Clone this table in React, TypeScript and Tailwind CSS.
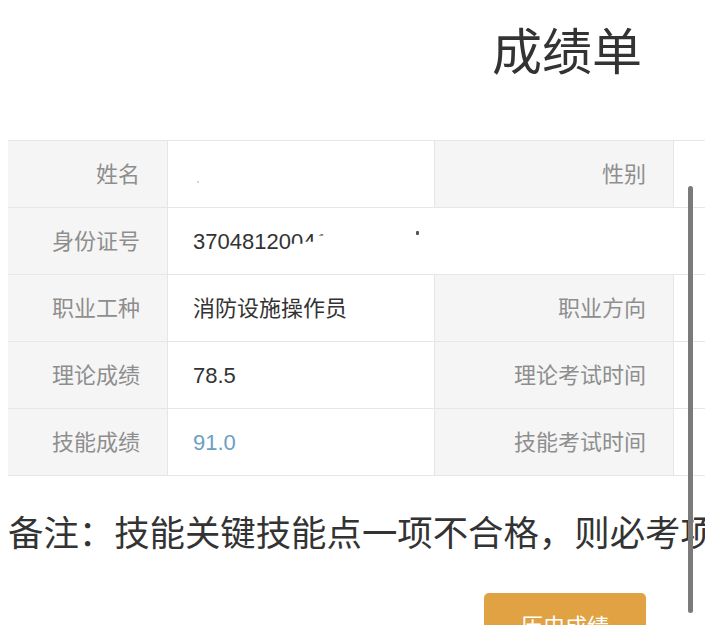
const rows = [
  { label: '姓名', value: 'name', label2: '性别' },
  { label: '身份证号', value: 'id' },
  { label: '职业工种', value: '消防设施操作员', label2: '职业方向' },
  { label: '理论成绩', value: '78.5', label2: '理论考试时间' },
  { label: '技能成绩', value: '91.0', label2: '技能考试时间', blue: true },
]

const font = "font-['Liberation_Sans','Noto_Sans_CJK_SC',sans-serif]"

function LabelCell({ text }: { text: string }) {
  return (
    <div className="flex h-[66px] items-center justify-end border-r border-[#e6e6e6] bg-[#f5f5f5] pr-[27px] text-[22px] text-[#8e8e8e]">
      {text}
    </div>
  )
}

function IdValue() {
  return (
    <div className="col-span-3 flex h-[66px] items-center pl-[25px] text-[22px] text-[#333]">
      <span>37048120</span>
      <span className="[clip-path:inset(0_0_42%_0)]">0</span>
      <span className="[clip-path:inset(0_0_48%_0)]">4</span>
      <span className="text-[#777] [clip-path:inset(0_0_66%_0)]">1</span>
      {/* stray mark left over from the blur */}
      <span className="ml-[88px] -mt-[16px] h-[4px] w-[3px] rounded-[1px] bg-[#555]" />
    </div>
  )
}

export default function App() {
  return (
    <div className={`relative h-[625px] w-[705px] overflow-hidden bg-white ${font}`}>
      <h1 className="mt-[28px] h-[50px] pl-[492px] text-[50px] leading-[50px] font-normal text-[#333]">
        成绩单
      </h1>

      <div className="ml-[8px] mt-[62px] grid w-[720px] grid-cols-[160px_267px_239px_1fr] border-t border-[#e6e6e6]">
        {rows.map((row) => (
          <div key={row.label} className="col-span-4 grid grid-cols-subgrid border-b border-[#e6e6e6]">
            <LabelCell text={row.label} />
            {row.value === 'id' ? (
              <IdValue />
            ) : (
              <>
                <div
                  className={`flex h-[66px] items-center border-r border-[#e6e6e6] bg-white pl-[25px] text-[22px] ${
                    row.blue ? 'text-[#6b9fc2]' : 'text-[#333]'
                  }`}
                >
                  {row.value === 'name' ? (
                    <span className="ml-[4px] mt-[15px] h-[2px] w-[2px] rounded-full bg-[#c4c4c4]" />
                  ) : (
                    row.value
                  )}
                </div>
                <LabelCell text={row.label2 ?? ''} />
                <div className="h-[66px] bg-white" />
              </>
            )}
          </div>
        ))}
      </div>

      <p className="mt-[33px] h-[50px] whitespace-nowrap pl-[8px] text-[35.4px] leading-[50px] text-[#333]">
        备注：技能关键技能点一项不合格，则必考项不合格
      </p>

      <div className="ml-[484px] mt-[34px] flex h-[66px] w-[162px] items-center justify-center rounded-[5px] bg-[#e0a243] text-[22px] text-white">
        历史成绩
      </div>

      {/* overlay scrollbar */}
      <div className="absolute left-[688px] top-[186px] h-[427px] w-[5px] rounded-full bg-[#7a7a7a]" />
    </div>
  )
}
